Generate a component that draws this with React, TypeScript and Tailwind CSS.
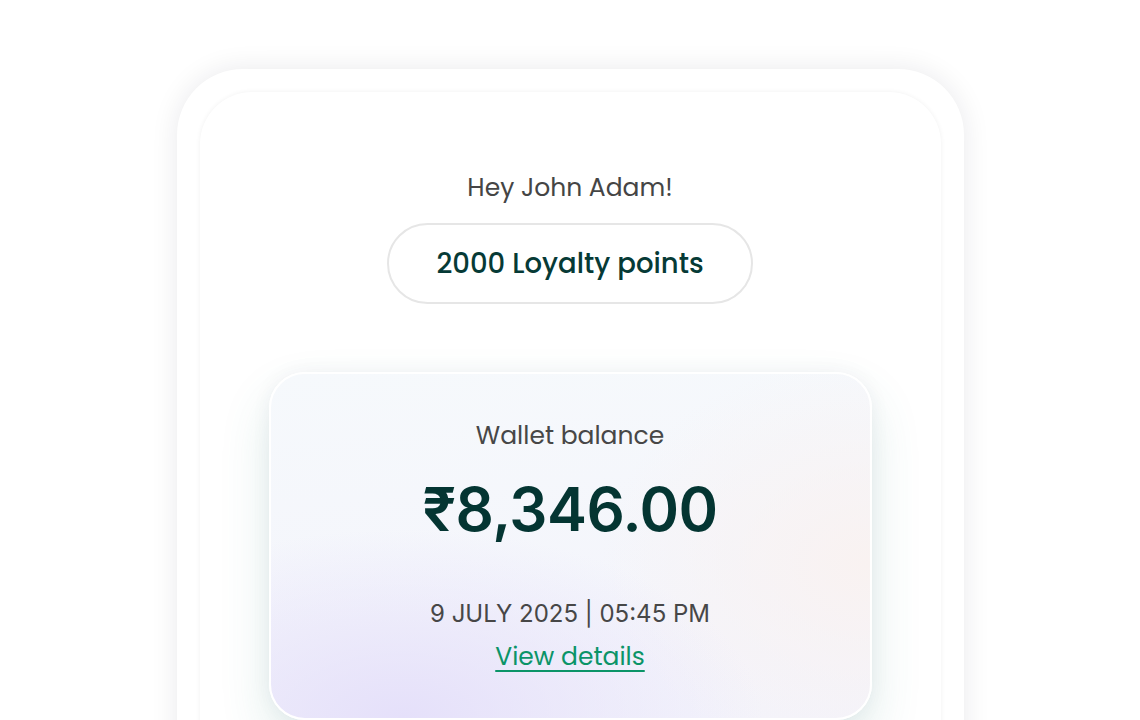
import React from "react";

export default function App() {
  return (
    <div className="w-[1140px] h-[720px] bg-white overflow-hidden flex justify-center pt-[69px]" style={{ fontFamily: "Poppins, Inter, 'Noto Sans', sans-serif" }}>
      <div className="w-[787px] h-[700px] shrink-0 rounded-t-[66px] bg-white p-[23px] pb-0 shadow-[0_0_28px_rgba(20,20,40,0.09)]">
        <div className="h-full rounded-t-[52px] bg-white shadow-[0_0_5px_rgba(20,20,40,0.06)] flex flex-col items-center pt-[80px]">
          <div className="text-[25px] leading-[32px] text-[#454545]">Hey John Adam!</div>
          <div className="mt-[19px] w-[366px] h-[81px] rounded-full border-2 border-[#e6e6e6] flex items-center justify-center text-[27.5px] font-medium text-[#063a36]">
            2000 Loyalty points
          </div>
          <div className="mt-[68px] w-[603px] h-[348px] shrink-0 rounded-[36px] border-2 border-white shadow-[0_24px_50px_rgba(60,140,130,0.16),0_0_20px_rgba(40,40,80,0.05)] bg-[radial-gradient(ellipse_60%_55%_at_22%_100%,#e5e0fa,transparent),radial-gradient(ellipse_45%_60%_at_100%_55%,#f9f2f1,transparent),linear-gradient(175deg,#f6f9fc,#f3f3fb)] flex flex-col items-center pt-[46px]">
            <div className="text-[25px] leading-[32px] text-[#474747]">Wallet balance</div>
            <div className="mt-[21px] text-[60px] leading-[72px] font-semibold text-[#043532] tracking-[-0.5px] font-['Inter',sans-serif]">₹8,346.00</div>
            <div className="mt-[53px] text-[24px] leading-[32px] text-[#474747] font-['Inter',sans-serif]">9 JULY 2025 | 05:45 PM</div>
            <div className="mt-[11px] text-[25px] leading-[32px] text-[#0b9468] underline underline-offset-[5px] decoration-[2px]">View details</div>
          </div>
        </div>
      </div>
    </div>
  );
}
